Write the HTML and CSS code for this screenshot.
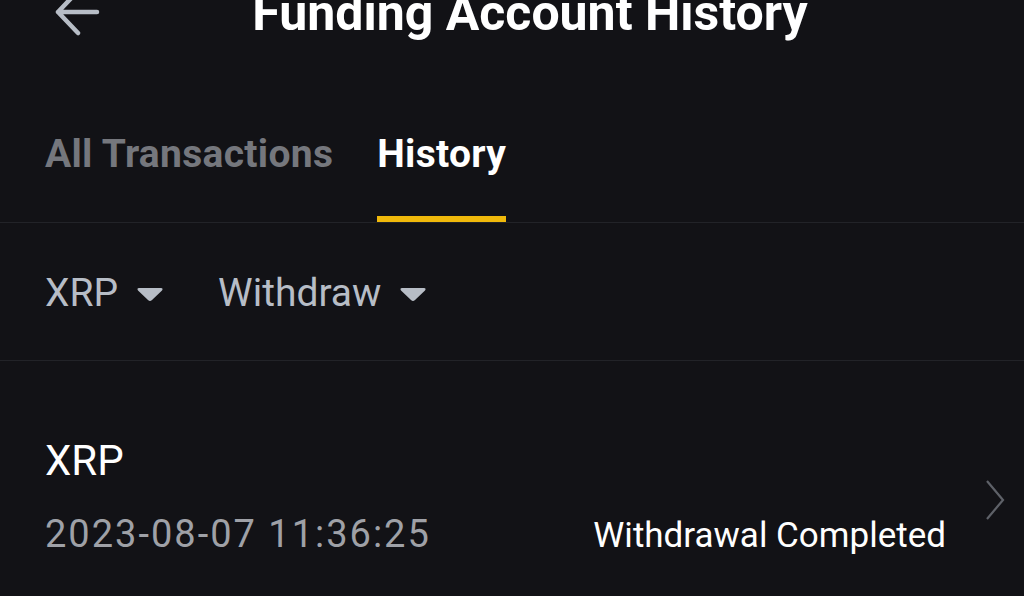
FILE: index.html
```html
<!DOCTYPE html>
<html lang="en">
<head>
    <meta charset="UTF-8">
    <meta name="viewport" content="width=device-width, initial-scale=1.0">
    <title>Funding Account History</title>
    <link rel="stylesheet" href="styles.css">
</head>
<body>
    <div class="topbar">
        <svg class="back" width="52" height="50" viewBox="0 0 52 50">
            <path d="M47 15 H8 M28 -6 L8 15 L28 36" fill="none" stroke="#B7BDC6" stroke-width="4.5" stroke-linecap="round" stroke-linejoin="round"/>
        </svg>
        <h1 class="title">Funding Account History</h1>
    </div>

    <div class="tabs">
        <div class="tab">All Transactions</div>
        <div class="tab active">History</div>
    </div>

    <div class="filters">
        <div class="filter">
            XRP
            <svg class="caret" width="28" height="16" viewBox="0 0 28 16">
                <path d="M3 2 H25 Q27.5 2 26 4.5 L16 14 Q14 16 12 14 L2 4.5 Q0.5 2 3 2 Z" fill="#B7BDC6"/>
            </svg>
        </div>
        <div class="filter">
            Withdraw
            <svg class="caret" width="28" height="16" viewBox="0 0 28 16">
                <path d="M3 2 H25 Q27.5 2 26 4.5 L16 14 Q14 16 12 14 L2 4.5 Q0.5 2 3 2 Z" fill="#B7BDC6"/>
            </svg>
        </div>
    </div>

    <div class="record">
        <div class="record-main">
            <div class="coin">XRP</div>
            <div class="record-line">
                <span class="date">2023-08-07 11:36:25</span>
                <span class="status">Withdrawal Completed</span>
            </div>
        </div>
        <svg class="chevron" width="22" height="42" viewBox="0 0 22 42">
            <path d="M3 2 L19 21 L3 40" fill="none" stroke="#5E6168" stroke-width="2.2"/>
        </svg>
    </div>
</body>
</html>
```

FILE: styles.css
```css
html, body {
    background-color: #121216;
}
body {
    margin: 0;
    padding: 0;
    font-family: Roboto, "Liberation Sans", sans-serif;
    color: #FFFFFF;
    overflow: hidden;
}
.topbar {
    position: relative;
    height: 40px;
    margin-top: -7px;
    display: flex;
    justify-content: center;
}
.back {
    position: absolute;
    left: 50px;
    top: 4px;
    overflow: visible;
}
.title {
    margin: 0;
    padding-left: 36px;
    font-size: 50px;
    line-height: 40px;
    font-weight: bold;
    white-space: nowrap;
}
.tabs {
    display: flex;
    gap: 44px;
    padding: 97px 45px 0;
    border-bottom: 1px solid #222328;
}
.tab {
    font-size: 39px;
    line-height: 48px;
    letter-spacing: 0.3px;
    font-weight: bold;
    color: #75777D;
    padding-bottom: 38px;
    border-bottom: 6px solid transparent;
}
.tab.active {
    color: #FFFFFF;
    border-bottom-color: #F0B90B;
}
.filters {
    display: flex;
    gap: 54px;
    padding: 46px 45px 43px;
    border-bottom: 1px solid #222328;
}
.filter {
    display: flex;
    align-items: center;
    gap: 18px;
    font-size: 39px;
    line-height: 48px;
    color: #B7BDC6;
}
.caret {
    margin-top: 2px;
}
.record {
    display: flex;
    align-items: center;
    padding: 0 18px 0 45px;
}
.record-main {
    flex: 1;
    padding-top: 75px;
}
.coin {
    font-size: 42px;
    line-height: 50px;
}
.record-line {
    display: flex;
    justify-content: space-between;
    align-items: baseline;
    margin-top: 24px;
}
.date {
    font-size: 38px;
    line-height: 48px;
    letter-spacing: 2px;
    color: #9FA1A7;
}
.status {
    font-size: 35px;
    line-height: 48px;
    color: #FFFFFF;
    margin-right: -2px;
}
.chevron {
    margin-left: 40px;
    margin-top: 78px;
}
```
